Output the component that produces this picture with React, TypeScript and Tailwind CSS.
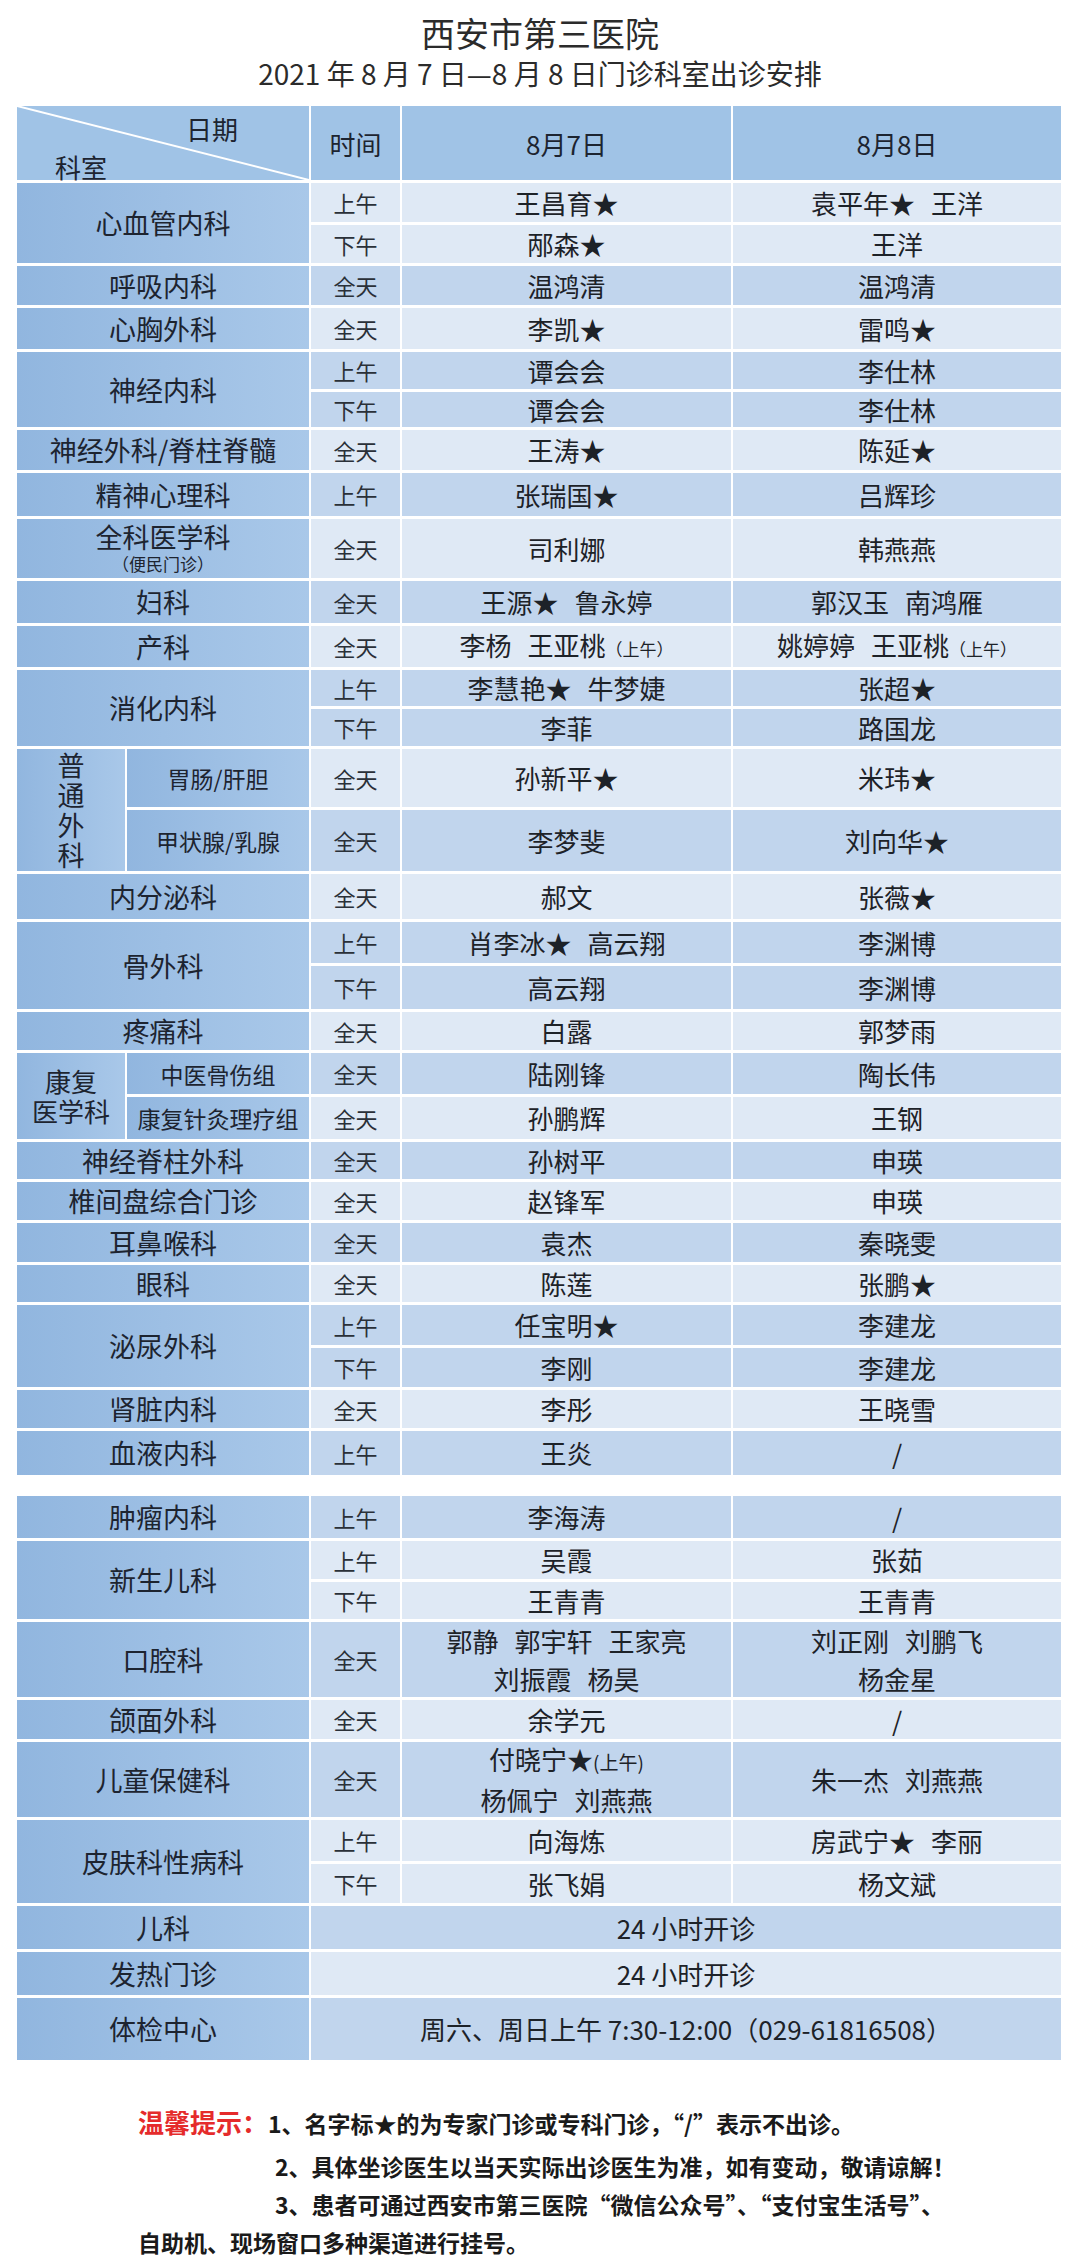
import React from "react";

const L = "bg-[#dfe9f5]";
const M = "bg-[#c1d5ed]";
const DEPT_BASE =
  "flex flex-col items-center justify-center text-[#1d2430] bg-linear-to-r from-[#91b6df] to-[#a9c8e9]";
const DEPT = `${DEPT_BASE} text-[27px] leading-[32px]`;

type Node = React.ReactNode;

function Names({ lines }: { lines: Node[][] }) {
  return (
    <div className="flex flex-col items-center justify-center gap-[6px]">
      {lines.map((ln, i) => (
        <div key={i} className="flex items-baseline justify-center gap-[16px] leading-[32px]">
          {ln.map((n, j) => (
            <span key={j} className="whitespace-nowrap">
              {n}
            </span>
          ))}
        </div>
      ))}
    </div>
  );
}

const Small = ({ children }: { children: Node }) => (
  <span className="text-[17px] align-baseline">{children}</span>
);

function Time({ t, bg }: { t: string; bg: string }) {
  return (
    <div className={`${bg} flex items-center justify-center text-[22px] text-[#2a3038]`}>{t}</div>
  );
}

function NameCell({ lines, bg, span }: { lines: Node[][]; bg: string; span?: string }) {
  return (
    <div className={`${bg} ${span ?? ""} flex items-center justify-center text-[26px] text-[#1d2228]`}>
      <Names lines={lines} />
    </div>
  );
}

type Sub = { t: string; a: Node[][]; b: Node[][] };
type Group = { name: Node; rows: Sub[]; bg: string };

function GroupRows({ g }: { g: Group }) {
  const n = g.rows.length;
  const rs = n === 2 ? "row-span-2" : "";
  return (
    <>
      <div className={`${DEPT} col-span-2 ${rs}`}>{g.name}</div>
      {g.rows.map((r, i) => (
        <React.Fragment key={i}>
          <Time t={r.t} bg={g.bg} />
          <NameCell lines={r.a} bg={g.bg} />
          <NameCell lines={r.b} bg={g.bg} />
        </React.Fragment>
      ))}
    </>
  );
}

function SubGroup({
  label,
  subs,
  bgs,
  labelCls,
}: {
  label: Node;
  subs: { name: string; r: Sub }[];
  bgs: string[];
  labelCls: string;
}) {
  return (
    <>
      <div className={`${DEPT_BASE} row-span-2 ${labelCls}`}>{label}</div>
      {subs.map((s, i) => (
        <React.Fragment key={i}>
          <div className={`${DEPT_BASE} text-[23px] leading-[28px] whitespace-nowrap`}>{s.name}</div>
          <Time t={s.r.t} bg={bgs[i]} />
          <NameCell lines={s.r.a} bg={bgs[i]} />
          <NameCell lines={s.r.b} bg={bgs[i]} />
        </React.Fragment>
      ))}
    </>
  );
}

const one = (t: string, a: Node, b: Node): Sub => ({ t, a: [[a]], b: [[b]] });

export default function App() {
  const font = "font-['Noto_Sans_CJK_SC','Noto_Sans',sans-serif]";
  return (
    <div className={`${font} w-[1080px] min-h-[2264px] bg-white text-[#1d2228]`}>
      <div className="pt-[12px] text-center text-[34px] leading-[42px] text-[#2b2b2b]">西安市第三医院</div>
      <div className="mt-[1px] text-center text-[28px] leading-[36px] text-[#2b2b2b]">
        2021 年 8 月 7 日—8 月 8 日门诊科室出诊安排
      </div>

      {/* Table 1 */}
      <div className="mt-[15px] ml-[17px] w-[1044px] grid grid-cols-[108px_182px_89px_329px_328px] gap-x-[2px] gap-y-[3px] grid-rows-[74px_39px_38px_39px_41px_37px_35px_40px_43px_59px_42px_41px_36px_37px_58px_61px_45px_41px_43px_38px_41px_42px_37px_38px_39px_37px_40px_39px_38px_44px]">
        <div className="col-span-2 relative bg-[#a0c3e6] text-[26px] text-[#1d2430] flex flex-col pt-[8px]">
          <svg className="absolute inset-0" width="292" height="74" viewBox="0 0 292 74">
            <line x1="0" y1="0" x2="292" y2="74" stroke="#ffffff" strokeWidth="2" />
          </svg>
          <div className="relative text-right pr-[71px] leading-[30px]">日期</div>
          <div className="relative pl-[38px] leading-[30px] mt-[8px]">科室</div>
        </div>
        <div className="bg-[#a0c3e6] flex items-center justify-center text-[26px] text-[#1d2430]">时间</div>
        <div className="bg-[#a0c3e6] flex items-center justify-center text-[26px] text-[#1d2430]">8月7日</div>
        <div className="bg-[#a0c3e6] flex items-center justify-center text-[26px] text-[#1d2430]">8月8日</div>

        <GroupRows
          g={{
            name: "心血管内科",
            bg: L,
            rows: [
              { t: "上午", a: [["王昌育★"]], b: [["袁平年★", "王洋"]] },
              one("下午", "邴森★", "王洋"),
            ],
          }}
        />
        <GroupRows g={{ name: "呼吸内科", bg: M, rows: [one("全天", "温鸿清", "温鸿清")] }} />
        <GroupRows g={{ name: "心胸外科", bg: L, rows: [one("全天", "李凯★", "雷鸣★")] }} />
        <GroupRows
          g={{ name: "神经内科", bg: M, rows: [one("上午", "谭会会", "李仕林"), one("下午", "谭会会", "李仕林")] }}
        />
        <GroupRows g={{ name: "神经外科/脊柱脊髓", bg: L, rows: [one("全天", "王涛★", "陈延★")] }} />
        <GroupRows g={{ name: "精神心理科", bg: M, rows: [one("上午", "张瑞国★", "吕辉珍")] }} />
        <GroupRows
          g={{
            name: (
              <>
                <span className="block leading-[30px]">全科医学科</span>
                <span className="block text-[17px] leading-[24px]">（便民门诊）</span>
              </>
            ),
            bg: L,
            rows: [one("全天", "司利娜", "韩燕燕")],
          }}
        />
        <GroupRows
          g={{ name: "妇科", bg: M, rows: [{ t: "全天", a: [["王源★", "鲁永婷"]], b: [["郭汉玉", "南鸿雁"]] }] }}
        />
        <GroupRows
          g={{
            name: "产科",
            bg: L,
            rows: [
              {
                t: "全天",
                a: [["李杨", <>王亚桃<Small>（上午）</Small></>]],
                b: [["姚婷婷", <>王亚桃<Small>（上午）</Small></>]],
              },
            ],
          }}
        />
        <GroupRows
          g={{
            name: "消化内科",
            bg: M,
            rows: [{ t: "上午", a: [["李慧艳★", "牛梦婕"]], b: [["张超★"]] }, one("下午", "李菲", "路国龙")],
          }}
        />
        <SubGroup
          labelCls="text-[27px] leading-[30px]"
          label={
            <>
              <span className="block">普</span>
              <span className="block">通</span>
              <span className="block">外</span>
              <span className="block">科</span>
            </>
          }
          bgs={[L, M]}
          subs={[
            { name: "胃肠/肝胆", r: one("全天", "孙新平★", "米玮★") },
            { name: "甲状腺/乳腺", r: one("全天", "李梦斐", "刘向华★") },
          ]}
        />
        <GroupRows g={{ name: "内分泌科", bg: L, rows: [one("全天", "郝文", "张薇★")] }} />
        <GroupRows
          g={{
            name: "骨外科",
            bg: M,
            rows: [{ t: "上午", a: [["肖李冰★", "高云翔"]], b: [["李渊博"]] }, one("下午", "高云翔", "李渊博")],
          }}
        />
        <GroupRows g={{ name: "疼痛科", bg: L, rows: [one("全天", "白露", "郭梦雨")] }} />
        <SubGroup
          labelCls="text-[26px] leading-[30px]"
          label={
            <>
              <span className="block">康复</span>
              <span className="block">医学科</span>
            </>
          }
          bgs={[M, L]}
          subs={[
            { name: "中医骨伤组", r: one("全天", "陆刚锋", "陶长伟") },
            { name: "康复针灸理疗组", r: one("全天", "孙鹏辉", "王钢") },
          ]}
        />
        <GroupRows g={{ name: "神经脊柱外科", bg: M, rows: [one("全天", "孙树平", "申瑛")] }} />
        <GroupRows g={{ name: "椎间盘综合门诊", bg: L, rows: [one("全天", "赵锋军", "申瑛")] }} />
        <GroupRows g={{ name: "耳鼻喉科", bg: M, rows: [one("全天", "袁杰", "秦晓雯")] }} />
        <GroupRows g={{ name: "眼科", bg: L, rows: [one("全天", "陈莲", "张鹏★")] }} />
        <GroupRows
          g={{ name: "泌尿外科", bg: M, rows: [one("上午", "任宝明★", "李建龙"), one("下午", "李刚", "李建龙")] }}
        />
        <GroupRows g={{ name: "肾脏内科", bg: L, rows: [one("全天", "李彤", "王晓雪")] }} />
        <GroupRows g={{ name: "血液内科", bg: M, rows: [one("上午", "王炎", "/")] }} />
      </div>

      {/* Table 2 */}
      <div className="mt-[21px] ml-[17px] w-[1044px] grid grid-cols-[108px_182px_89px_329px_328px] gap-x-[2px] gap-y-[3px] grid-rows-[42px_38px_37px_75px_39px_75px_41px_39px_43px_43px_62px]">
        <GroupRows g={{ name: "肿瘤内科", bg: M, rows: [one("上午", "李海涛", "/")] }} />
        <GroupRows
          g={{ name: "新生儿科", bg: L, rows: [one("上午", "吴霞", "张茹"), one("下午", "王青青", "王青青")] }}
        />
        <GroupRows
          g={{
            name: "口腔科",
            bg: M,
            rows: [
              {
                t: "全天",
                a: [
                  ["郭静", "郭宇轩", "王家亮"],
                  ["刘振霞", "杨昊"],
                ],
                b: [["刘正刚", "刘鹏飞"], ["杨金星"]],
              },
            ],
          }}
        />
        <GroupRows g={{ name: "颌面外科", bg: L, rows: [one("全天", "余学元", "/")] }} />
        <GroupRows
          g={{
            name: "儿童保健科",
            bg: M,
            rows: [
              {
                t: "全天",
                a: [[<>付晓宁★<span className="text-[19px]">(上午)</span></>], ["杨佩宁", "刘燕燕"]],
                b: [["朱一杰", "刘燕燕"]],
              },
            ],
          }}
        />
        <GroupRows
          g={{
            name: "皮肤科性病科",
            bg: L,
            rows: [{ t: "上午", a: [["向海炼"]], b: [["房武宁★", "李丽"]] }, one("下午", "张飞娟", "杨文斌")],
          }}
        />
        <div className={`${DEPT} col-span-2`}>儿科</div>
        <NameCell lines={[["24 小时开诊"]]} bg={M} span="col-span-3" />
        <div className={`${DEPT} col-span-2`}>发热门诊</div>
        <NameCell lines={[["24 小时开诊"]]} bg={L} span="col-span-3" />
        <div className={`${DEPT} col-span-2`}>体检中心</div>
        <NameCell lines={[["周六、周日上午 7:30-12:00（029-61816508）"]]} bg={M} span="col-span-3" />
      </div>

      {/* Tips */}
      <div className="mt-[42px] pl-[138px] font-bold text-[23px] text-[#1a1a1a]">
        <div className="leading-[40px] whitespace-nowrap">
          <span className="text-[26px] text-[#e52b2b]">温馨提示：</span>
          1、名字标★的为专家门诊或专科门诊，“/”表示不出诊。
        </div>
        <div className="mt-[4px] pl-[137px] leading-[38px] whitespace-nowrap">
          2、具体坐诊医生以当天实际出诊医生为准，如有变动，敬请谅解！
        </div>
        <div className="pl-[137px] leading-[38px] whitespace-nowrap">
          3、患者可通过西安市第三医院“微信公众号”、“支付宝生活号”、
        </div>
        <div className="leading-[38px] whitespace-nowrap">自助机、现场窗口多种渠道进行挂号。</div>
      </div>
    </div>
  );
}
